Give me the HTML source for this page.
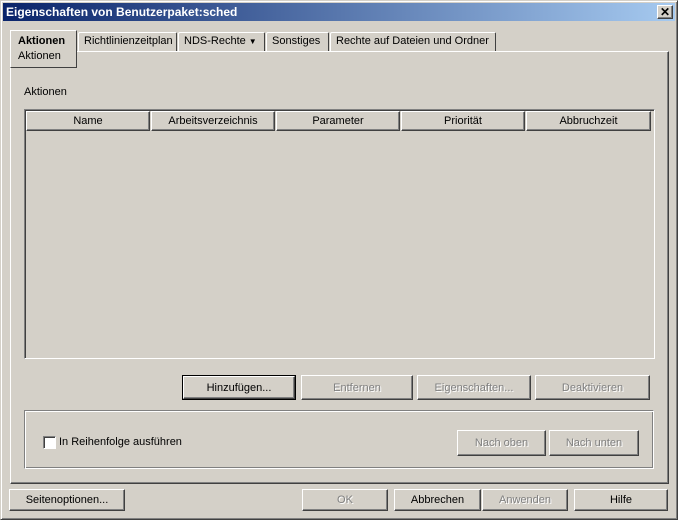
<!DOCTYPE html>
<html><head><meta charset="utf-8"><style>
*{box-sizing:border-box;margin:0;padding:0}
body{width:678px;height:520px;background:#d4d0c8;font:11px "Liberation Sans",sans-serif;color:#000;position:relative;overflow:hidden}
.a{position:absolute}
.win{left:0;top:0;width:678px;height:520px;border:1px solid;border-color:#d4d0c8 #404040 #404040 #d4d0c8;box-shadow:inset 1px 1px #fff,inset -1px -1px #808080}
.title{left:3px;top:3px;width:672px;height:18px;background:linear-gradient(90deg,#0a246a,#a6caf0);color:#fff;font-weight:bold;font-size:12px;line-height:18px;padding-left:3px}
.btn{position:absolute;background:#d4d0c8;border:1px solid;border-color:#fff #404040 #404040 #fff;box-shadow:inset -1px -1px #808080;text-align:center;display:flex;align-items:center;justify-content:center}
.dis{color:#808080;text-shadow:1px 1px #fff}
.def{outline:1px solid #000}
.tab{position:absolute;top:32px;height:19px;border:1px solid;border-bottom:none;border-color:#fff #404040 #fff #fff;border-radius:2px 2px 0 0;padding:0 5px;line-height:17px;white-space:nowrap}
.panel{left:10px;top:51px;width:659px;height:433px;border:1px solid;border-color:#fff #404040 #404040 #fff;box-shadow:inset -1px -1px #808080}
.hd{position:absolute;top:111px;height:20px;border:1px solid;border-color:#fff #404040 #404040 #fff;box-shadow:inset -1px -1px #808080;text-align:center;line-height:18px}
</style></head><body>
<div class="a win"></div>
<div class="a title">Eigenschaften von Benutzerpaket:sched</div>
<div class="btn" style="left:657px;top:5px;width:16px;height:14px;font-weight:bold;font-size:12px">✕</div>
<div class="a panel"></div>
<div class="tab" style="left:78px;width:99px">Richtlinienzeitplan</div>
<div class="tab" style="left:178px;width:87px">NDS-Rechte <span style="font-size:8px">▼</span></div>
<div class="tab" style="left:266px;width:63px">Sonstiges</div>
<div class="tab" style="left:330px;width:166px">Rechte auf Dateien und Ordner</div>
<div class="a" style="left:10px;top:30px;width:67px;height:38px;background:#d4d0c8;border:1px solid;border-color:#fff #404040 #404040 #fff;border-top-color:#fff;padding:3px 0 0 7px;line-height:15px"><b>Aktionen</b><br>Aktionen</div>
<div class="a" style="left:24px;top:86px">Aktionen</div>
<div class="a" style="left:24px;top:109px;width:631px;height:250px;border:1px solid;border-color:#808080 #fff #fff #808080;box-shadow:inset 1px 1px #404040"></div>
<div class="hd" style="left:26px;width:124px">Name</div>
<div class="hd" style="left:151px;width:124px">Arbeitsverzeichnis</div>
<div class="hd" style="left:276px;width:124px">Parameter</div>
<div class="hd" style="left:401px;width:124px">Priorität</div>
<div class="hd" style="left:526px;width:125px">Abbruchzeit</div>
<div class="btn def" style="left:183px;top:376px;width:112px;height:23px">Hinzufügen...</div>
<div class="btn dis" style="left:301px;top:375px;width:112px;height:25px">Entfernen</div>
<div class="btn dis" style="left:417px;top:375px;width:114px;height:25px">Eigenschaften...</div>
<div class="btn dis" style="left:535px;top:375px;width:115px;height:25px">Deaktivieren</div>
<div class="a" style="left:24px;top:410px;width:630px;height:59px;border:1px solid;border-color:#808080 #fff #fff #808080;box-shadow:inset 1px 1px #fff,inset -1px -1px #808080"></div>
<div class="a" style="left:43px;top:436px;width:13px;height:13px;background:#fff;border:1px solid;border-color:#808080 #fff #fff #808080;box-shadow:inset 1px 1px #404040"></div>
<div class="a" style="left:59px;top:436px">In Reihenfolge ausführen</div>
<div class="btn dis" style="left:457px;top:430px;width:89px;height:26px">Nach oben</div>
<div class="btn dis" style="left:549px;top:430px;width:90px;height:26px">Nach unten</div>
<div class="btn" style="left:9px;top:489px;width:116px;height:22px">Seitenoptionen...</div>
<div class="btn dis" style="left:302px;top:489px;width:86px;height:22px">OK</div>
<div class="btn" style="left:394px;top:489px;width:87px;height:22px">Abbrechen</div>
<div class="btn dis" style="left:482px;top:489px;width:86px;height:22px">Anwenden</div>
<div class="btn" style="left:574px;top:489px;width:94px;height:22px">Hilfe</div>
</body></html>
